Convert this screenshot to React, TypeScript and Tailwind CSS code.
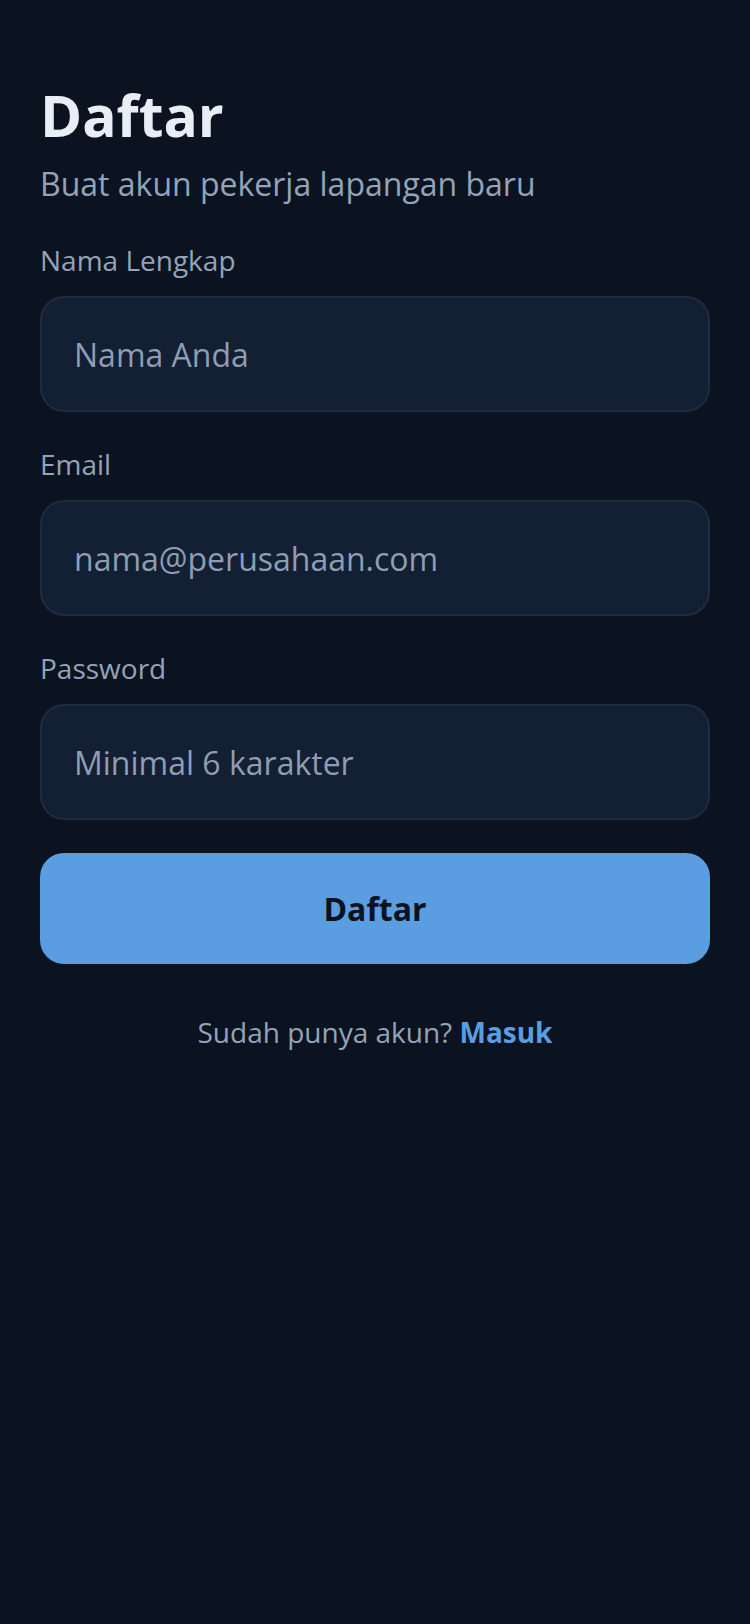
export default function App() {
  const fields = [
    { label: 'Nama Lengkap', placeholder: 'Nama Anda', type: 'text' },
    { label: 'Email', placeholder: 'nama@perusahaan.com', type: 'email' },
    { label: 'Password', placeholder: 'Minimal 6 karakter', type: 'password' },
  ];

  return (
    <div
      className="min-h-[1624px] w-full bg-[#0b1320] px-10 pt-[80px]"
      style={{ fontFamily: '"Open Sans", "Noto Sans", sans-serif' }}
    >
      {/* Header */}
      <h1 className="text-[57px] font-bold leading-[70px] text-[#e8eef6]">Daftar</h1>
      <p className="mt-[12px] text-[32px] leading-[44px] text-[#94a3b8]">
        Buat akun pekerja lapangan baru
      </p>

      {/* Form */}
      <form className="mt-[34px] flex flex-col" onSubmit={(e) => e.preventDefault()}>
        {fields.map((f, i) => (
          <div key={f.label} className={i > 0 ? 'mt-[32px]' : ''}>
            <label className="block text-[28px] leading-[40px] text-[#94a3b8]">{f.label}</label>
            <input
              type={f.type}
              placeholder={f.placeholder}
              className="mt-4 h-[116px] w-full rounded-[24px] border-2 border-[#1e2b40] bg-[#131f33] px-8 text-[32px] text-[#e8eef6] outline-none placeholder:text-[#8e9db3]"
            />
          </div>
        ))}

        <button
          type="submit"
          className="mt-[33px] h-[111px] w-full rounded-[24px] bg-[#5a9de0] text-[32px] font-bold text-[#0b1320]"
        >
          Daftar
        </button>
      </form>

      <p className="mt-[48px] text-center text-[28px] leading-[40px] text-[#94a3b8]">
        Sudah punya akun? <a href="#" className="font-bold text-[#5a9de0]">Masuk</a>
      </p>
    </div>
  );
}
